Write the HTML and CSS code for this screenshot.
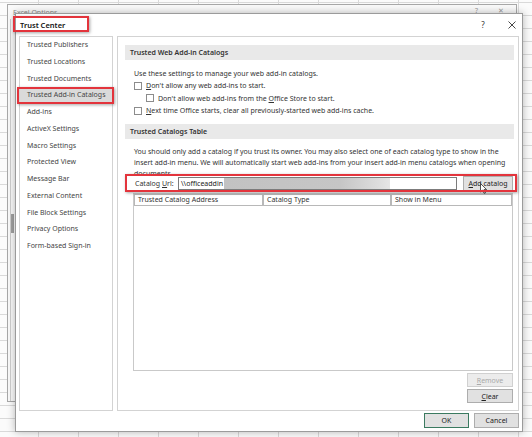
FILE: index.html
```html
<!DOCTYPE html>
<html>
<head>
<meta charset="utf-8">
<title>Trust Center</title>
<link rel="stylesheet" href="styles.css">
</head>
<body>
<div class="desk">
  <div class="back-win">
    <div class="back-title">Excel Options</div>
    <div class="back-ctrls"><span>?</span><span>✕</span></div>
    <div class="back-line"></div>
    <div class="back-thumb"></div>
  </div>

  <div class="dialog">
    <div class="titlebar">
      <span class="title mark">Trust Center</span>
      <span class="tb-btn help">?</span>
      <span class="tb-btn close">
        <svg width="8" height="8" viewBox="0 0 8 8"><path d="M0.5 0.5 L7.5 7.5 M7.5 0.5 L0.5 7.5" stroke="#333" stroke-width="0.9" fill="none"/></svg>
      </span>
    </div>

    <div class="body">
      <ul class="nav">
        <li>Trusted Publishers</li>
        <li>Trusted Locations</li>
        <li>Trusted Documents</li>
        <li class="sel mark">Trusted Add-in Catalogs</li>
        <li>Add-ins</li>
        <li>ActiveX Settings</li>
        <li>Macro Settings</li>
        <li>Protected View</li>
        <li>Message Bar</li>
        <li>External Content</li>
        <li>File Block Settings</li>
        <li>Privacy Options</li>
        <li>Form-based Sign-in</li>
      </ul>

      <div class="panel">
        <div class="sec-head">Trusted Web Add-in Catalogs</div>
        <div class="sec">
          <div class="row">Use these settings to manage your web add-in catalogs.</div>
          <div class="row"><span class="box"></span><span><u>D</u>on't allow any web add-ins to start.</span></div>
          <div class="row sub"><span class="box"></span><span>Don't allow web add-ins from the <u>O</u>ffice Store to start.</span></div>
          <div class="row"><span class="box"></span><span><u>N</u>ext time Office starts, clear all previously-started web add-ins cache.</span></div>
        </div>

        <div class="sec-head second">Trusted Catalogs Table</div>
        <p class="para">You should only add a catalog if you trust its owner. You may also select one of each catalog type to show in the<br>insert add-in menu. We will automatically start web add-ins from your insert add-in menu catalogs when opening<br>documents.</p>

        <div class="url-row mark">
          <span class="url-label">Catalog <u>U</u>rl:</span>
          <span class="url-input"><span class="url-text">\\officeaddin</span><span class="redact"></span></span>
          <button class="btn add"><u>A</u>dd catalog</button>
          <svg class="cursor" width="7" height="11" viewBox="0 0 7 11"><path d="M0.5 0.5 L0.5 9 L2.6 7.1 L4.2 10.4 L5.5 9.8 L4 6.6 L6.6 6.6 Z" fill="#fff" stroke="#111" stroke-width="0.7"/></svg>
        </div>

        <div class="table">
          <div class="thead">
            <span>Trusted Catalog Address</span>
            <span>Catalog Type</span>
            <span>Show in Menu</span>
          </div>
        </div>

        <div class="side-btns">
          <button class="btn dis"><u>R</u>emove</button>
          <button class="btn"><u>C</u>lear</button>
        </div>
      </div>
    </div>

    <div class="footer">
      <button class="btn foot ok">OK</button>
      <button class="btn foot">Cancel</button>
    </div>
  </div>
</div>
</body>
</html>
```

FILE: styles.css
```css
* {
  box-sizing: border-box;
  margin: 0;
  padding: 0;
}

body {
  margin: 0;
  width: 532px;
  height: 437px;
  overflow: hidden;
  font-family: "Noto Sans", "Open Sans", sans-serif;
  font-size: 7px;
  color: #333;
  background-color: #fbfbfb;
  background-image:
    linear-gradient(to right, #d9d9d9 1px, transparent 1px),
    linear-gradient(to bottom, #d9d9d9 1px, transparent 1px);
  background-size: 40px 13px;
  background-position: 38px 2px;
}

.desk {
  position: relative;
  width: 532px;
  height: 437px;
}

/* background Excel Options window */
.back-win {
  position: absolute;
  left: 7px;
  top: 4px;
  width: 510px;
  height: 398px;
  background: #fafafa;
  border: 1px solid #a8a8a8;
}

.back-title {
  position: absolute;
  left: 5px;
  top: 3px;
  font-size: 7px;
  color: #8a8a8a;
}

.back-ctrls {
  position: absolute;
  right: 12px;
  top: 1px;
  display: flex;
  gap: 20px;
  color: #9a9a9a;
  font-size: 7px;
}

.back-line {
  position: absolute;
  left: 2px;
  top: 14px;
  bottom: 0;
  border-left: 1px solid #cfcfcf;
}

.back-thumb {
  position: absolute;
  left: 3px;
  top: 209px;
  width: 3px;
  height: 19px;
  background: #a0a0a0;
}

/* Trust Center dialog */
.dialog {
  position: absolute;
  left: 15px;
  top: 13px;
  width: 508px;
  height: 419px;
  background: #fff;
  border: 1px solid #9b9b9b;
  box-shadow: 0 0 8px rgba(0, 0, 0, 0.28);
  display: flex;
  flex-direction: column;
}

.titlebar {
  flex: none;
  height: 21px;
  display: flex;
  align-items: center;
  padding-left: 4px;
  padding-right: 3px;
}

.title {
  position: relative;
  font-size: 7.5px;
  font-weight: 600;
  color: #111;
  line-height: 10px;
}

.mark::after {
  content: "";
  position: absolute;
  border: 2px solid #e3343c;
  box-shadow: 1px 1px 3px rgba(0, 0, 0, 0.35);
  pointer-events: none;
}

.title::after {
  top: -3.5px;
  bottom: -2.5px;
  left: -7px;
  right: -24px;
}

.tb-btn {
  display: flex;
  align-items: center;
  justify-content: center;
  color: #333;
  font-size: 8px;
}

.help {
  margin-left: auto;
  width: 10px;
}

.close {
  width: 14px;
  margin-left: 17px;
}

.body {
  flex: 1;
  min-height: 0;
  display: flex;
  gap: 4px;
  padding: 1px 3px 0 3px;
}

.nav {
  flex: none;
  width: 94px;
  border: 1px solid #d3d3d3;
  list-style: none;
  padding-top: 1px;
}

.nav li {
  position: relative;
  height: 14px;
  line-height: 14px;
  padding-left: 7px;
  margin-bottom: 2.75px;
  color: #454545;
  white-space: nowrap;
}

.nav li.sel {
  background: #dadada;
}

.nav li.sel::after {
  top: -1px;
  bottom: -2px;
  left: -3px;
  right: -2px;
}

.panel {
  flex: 1;
  border: 1px solid #d3d3d3;
  padding: 8px 4px 0 7px;
  display: flex;
  flex-direction: column;
}

.sec-head {
  flex: none;
  height: 15px;
  line-height: 15px;
  padding-left: 5px;
  background: #e9e9e9;
  font-weight: 600;
  color: #333;
}

.sec-head.second {
  margin-top: 7.25px;
}

.sec {
  margin-top: 6.75px;
  padding-left: 9px;
}

.row {
  height: 12.5px;
  display: flex;
  align-items: center;
  gap: 4px;
  white-space: nowrap;
}

.row.sub {
  padding-left: 12px;
}

.box {
  flex: none;
  width: 8px;
  height: 8px;
  border: 1px solid #8c8c8c;
  background: #fff;
}

.para {
  flex: none;
  margin-top: 7px;
  padding-left: 9px;
  line-height: 11px;
  height: 29px;
  overflow: hidden;
  white-space: nowrap;
}

.url-row {
  flex: none;
  position: relative;
  height: 17px;
  display: flex;
  align-items: center;
  padding-left: 10px;
}

.url-row::after {
  top: -1px;
  bottom: 0;
  left: 0;
  right: -3px;
}

.url-label {
  flex: none;
  width: 43px;
}

.url-input {
  flex: none;
  width: 279px;
  height: 13px;
  border: 1px solid #7c7c7c;
  background: #fff;
  display: flex;
  align-items: center;
  padding-left: 2px;
}

.url-text {
  color: #222;
}

.redact {
  width: 166px;
  height: 11px;
  margin-left: 1px;
  background: linear-gradient(to right, #c2c2c2 0%, #c6c6c6 70%, #dcdcdc 92%, #e6e6e6 100%);
}

.btn {
  font-family: inherit;
  font-size: 7px;
  color: #222;
  width: 46px;
  height: 14px;
  border: 1px solid #adadad;
  background: #e1e1e1;
  display: flex;
  align-items: center;
  justify-content: center;
}

.btn.add {
  margin-left: 6px;
  width: 50px;
  height: 15px;
}

.btn.dis {
  color: #a9a9a9;
  border-color: #d0d0d0;
  background: #ececec;
}

.cursor {
  position: absolute;
  left: 355px;
  top: 8px;
}

.table {
  flex: none;
  height: 178px;
  margin: 1px 1px 0 8px;
  border: 1px solid #c9c9c9;
}

.thead {
  display: grid;
  grid-template-columns: 129px 128px 1fr;
  height: 12px;
}

.thead span {
  border: 1px solid #b8b8b8;
  line-height: 10px;
  padding-left: 3px;
  color: #333;
  white-space: nowrap;
}

.side-btns {
  display: flex;
  flex-direction: column;
  align-items: flex-end;
  gap: 2px;
  margin-top: 2px;
  padding-right: 1px;
}

.footer {
  flex: none;
  height: 20px;
  display: flex;
  justify-content: flex-end;
  gap: 5px;
  padding: 2px 3px 0 0;
}

.btn.foot {
  width: 45px;
  height: 14.5px;
}

.btn.ok {
  border-color: #3b7a60;
}
```
